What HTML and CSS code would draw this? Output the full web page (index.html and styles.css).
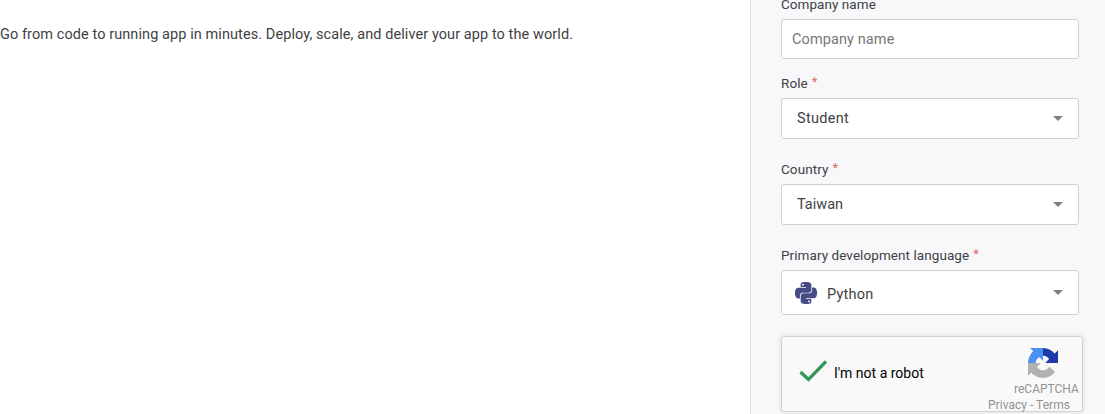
FILE: index.html
```html
<!DOCTYPE html>
<html lang="en">
<head>
<meta charset="utf-8">
<title>Sign up</title>
<link rel="stylesheet" href="styles.css">
</head>
<body>
<div class="page">
  <main class="intro"><p class="tagline">Go from code to running app in minutes. Deploy, scale, and deliver your app to the world.</p></main>
  <form class="signup">
    <label class="label label-company" for="company">Company name</label>
    <input class="field" id="company" type="text" placeholder="Company name">
    <div class="label label-role"><span>Role</span><span class="required">*</span></div>
    <div class="select"><span class="value student">Student</span><svg class="caret" viewBox="0 0 10 5"><path d="M0 0h10L5 5z"/></svg></div>
    <div class="label label-country"><span>Country</span><span class="required">*</span></div>
    <div class="select"><span class="value taiwan">Taiwan</span><svg class="caret" viewBox="0 0 10 5"><path d="M0 0h10L5 5z"/></svg></div>
    <div class="label label-language"><span>Primary development language</span><span class="required">*</span></div>
    <div class="select language">
      <svg class="python" viewBox="0 0 24 24"><path d="M14.25.18l.9.2.73.26.59.3.45.32.34.34.25.34.16.33.1.3.04.26.02.2-.01.13V8.5l-.05.63-.13.55-.21.46-.26.38-.3.31-.33.25-.35.19-.35.14-.33.1-.3.07-.26.04-.21.02H8.77l-.69.05-.59.14-.5.22-.41.27-.33.32-.27.35-.2.36-.15.37-.1.35-.07.32-.04.27-.02.21v3.06H3.17l-.21-.03-.28-.07-.32-.12-.35-.18-.36-.26-.36-.36-.35-.46-.32-.59-.28-.73-.21-.88-.14-1.05-.05-1.23.06-1.22.16-1.04.24-.87.32-.71.36-.57.4-.44.42-.33.42-.24.4-.16.36-.1.32-.05.24-.01h.16l.06.01h8.16v-.83H6.18l-.01-2.75-.02-.37.05-.34.11-.31.17-.28.25-.26.31-.23.38-.2.44-.18.51-.15.58-.12.64-.1.71-.06.77-.04.84-.02 1.27.05zm-6.3 1.98l-.23.33-.08.41.08.41.23.34.33.22.41.09.41-.09.33-.22.23-.34.08-.41-.08-.41-.23-.33-.33-.22-.41-.09-.41.09zm13.09 3.95l.28.06.32.12.35.18.36.27.36.35.35.47.32.59.28.73.21.88.14 1.04.05 1.23-.06 1.23-.16 1.04-.24.86-.32.71-.36.57-.4.45-.42.33-.42.24-.4.16-.36.09-.32.05-.24.02-.16-.01h-8.22v.82h5.84l.01 2.76.02.36-.05.34-.11.31-.17.29-.25.25-.31.24-.38.2-.44.17-.51.15-.58.13-.64.09-.71.07-.77.04-.84.01-1.27-.04-1.07-.14-.9-.2-.73-.25-.59-.3-.45-.33-.34-.34-.25-.34-.16-.33-.1-.3-.04-.25-.02-.2.01-.13v-5.34l.05-.64.13-.54.21-.46.26-.38.3-.32.33-.24.35-.2.35-.14.33-.1.3-.06.26-.04.21-.02.13-.01h5.84l.69-.05.59-.14.5-.21.41-.28.33-.32.27-.35.2-.36.15-.36.1-.35.07-.32.04-.28.02-.21V6.07h2.09l.14.01zm-6.47 14.25l-.23.33-.08.41.08.41.23.33.33.23.41.08.41-.08.33-.23.23-.33.08-.41-.08-.41-.23-.33-.33-.23-.41-.08-.41.08z"/></svg>
      <span class="value">Python</span><svg class="caret" viewBox="0 0 10 5"><path d="M0 0h10L5 5z"/></svg>
    </div>
    <div class="captcha">
      <svg class="check" viewBox="0 0 29 23"><path d="M1.5 12L9.5 19.5L27 1.5"/></svg>
      <span class="robot">I'm not a robot</span>
      <div class="brand">
        <svg class="logo" viewBox="0 0 64 64">
          <path fill="#1c3aa9" d="M64 31.955l-.033-1.37V4.687l-7.16 7.16C50.904 4.674 41.993.093 32.007.093c-10.392 0-19.624 4.96-25.458 12.64l11.736 11.86a15.55 15.55 0 0 1 4.754-5.334c2.05-1.6 4.952-2.906 8.968-2.906.485 0 .86.057 1.135.163 4.976.393 9.288 3.14 11.828 7.124l-8.307 8.307L64 31.953"/>
          <path fill="#4a90f0" d="M31.862.094l-1.37.033H4.594l7.16 7.16C4.58 13.147 0 22.058 0 32.043c0 10.392 4.96 19.624 12.64 25.458L24.5 45.765a15.55 15.55 0 0 1-5.334-4.754c-1.6-2.05-2.906-4.952-2.906-8.968 0-.485.057-.86.163-1.135.393-4.976 3.14-9.288 7.124-11.828l8.307 8.307L31.86.095"/>
          <path fill="#b1b1b1" d="M.001 32.045l.033 1.37v25.898l7.16-7.16c5.86 7.173 14.774 11.754 24.76 11.754 10.392 0 19.624-4.96 25.458-12.64l-11.736-11.86a15.55 15.55 0 0 1-4.754 5.334c-2.05 1.6-4.952 2.906-8.968 2.906-.485 0-.86-.057-1.135-.163-4.976-.393-9.288-3.14-11.828-7.124l8.307-8.307c-10.522.04-22.4.066-27.295-.005"/>
        </svg>
        <span class="brand-name">reCAPTCHA</span>
        <span class="legal">Privacy - Terms</span>
      </div>
    </div>
  </form>
</div>
</body>
</html>
```
FILE: styles.css
```css
* { box-sizing: border-box; }
body { margin: 0; font-family: Roboto, "Liberation Sans", sans-serif; color: #3f3f44; background: #fff; }
.page { display: flex; width: 1105px; height: 414px; overflow: hidden; }
.intro { width: 750px; padding-top: 25px; }
.tagline { margin: 0; font-size: 14.5px; line-height: 20px; letter-spacing: .08px; white-space: nowrap; }
.signup { display: flex; flex-direction: column; width: 355px; padding-left: 30px; border-left: 1px solid #dfdfe1; background: #f8f8fb; }
.label { display: flex; flex: none; gap: 4px; font-size: 13.5px; line-height: 16px; letter-spacing: .07px; white-space: nowrap; }
.label-company { height: 19px; line-height: 8px; letter-spacing: .05px; }
.label-role { height: 39px; padding-top: 16px; }
.label-country, .label-language { height: 45px; padding-top: 22px; }
.required { color: #d96a6a; font-size: 13px; line-height: 14px; }
.field, .select { flex: none; width: 298px; border: 1px solid #cfcfd1; border-radius: 3px; background: #fff; }
.field { height: 40px; padding: 0 10px; font: 14.5px Roboto, sans-serif; letter-spacing: .1px; }
.field::placeholder { color: #777; }
.select { display: flex; align-items: center; height: 41px; padding: 0 15px; font-size: 14.5px; }
.student { letter-spacing: .3px; }
.caret { width: 10px; height: 5px; margin-left: auto; fill: #808080; }
.language { height: 45px; padding-left: 13px; }
.language .value { padding-top: 3px; letter-spacing: .25px; }
.python { width: 22px; height: 22px; margin-right: 10px; fill: #474b83; }
.captcha { display: flex; flex: none; width: 302px; height: 76px; margin-top: 21px; border: 1px solid #d3d3d3; border-radius: 3px; background: #f9f9f9; box-shadow: 0 0 4px 1px rgba(0,0,0,.08); }
.check { width: 29px; height: 23px; margin: 23px 0 0 17px; fill: none; stroke: #35985a; stroke-width: 3.3; }
.robot { padding-top: 27px; margin-left: 6px; color: #000; font-size: 14px; line-height: 18px; white-space: nowrap; }
.brand { display: flex; flex-direction: column; width: 94px; margin-left: auto; padding-top: 11px; color: #929292; font-size: 12px; line-height: 16px; white-space: nowrap; }
.logo { flex: none; width: 30px; height: 30px; margin-left: 40px; }
.brand-name { margin: 3px 0 0 26px; }
.legal { letter-spacing: .03px; }
```
